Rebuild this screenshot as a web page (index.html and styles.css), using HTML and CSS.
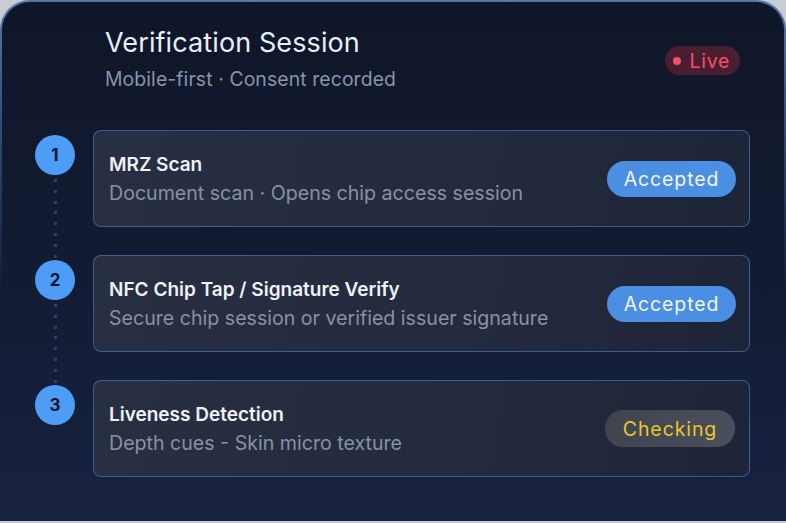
FILE: index.html
```html
<!DOCTYPE html>
<html lang="en">
<head>
<meta charset="utf-8">
<title>Verification Session</title>
<link rel="stylesheet" href="styles.css">
</head>
<body>
<div class="panel">
  <header class="head">
    <div class="head-text">
      <h1 class="title">Verification Session</h1>
      <p class="subtitle">Mobile-first · Consent recorded</p>
    </div>
    <span class="live"><span class="live-dot"></span>Live</span>
  </header>
  <ol class="steps">
    <li class="step">
      <div class="marker"><span class="num">1</span><span class="line"></span></div>
      <div class="card">
        <div class="card-text">
          <div class="card-title">MRZ Scan</div>
          <div class="card-sub">Document scan · Opens chip access session</div>
        </div>
        <span class="pill pill-ok">Accepted</span>
      </div>
    </li>
    <li class="step">
      <div class="marker"><span class="num">2</span><span class="line"></span></div>
      <div class="card">
        <div class="card-text">
          <div class="card-title">NFC Chip Tap / Signature Verify</div>
          <div class="card-sub">Secure chip session or verified issuer signature</div>
        </div>
        <span class="pill pill-ok">Accepted</span>
      </div>
    </li>
    <li class="step">
      <div class="marker"><span class="num">3</span></div>
      <div class="card">
        <div class="card-text">
          <div class="card-title">Liveness Detection</div>
          <div class="card-sub">Depth cues - Skin micro texture</div>
        </div>
        <span class="pill pill-wait">Checking</span>
      </div>
    </li>
  </ol>
</div>
</body>
</html>
```
FILE: styles.css
```css
* { box-sizing: border-box; }
html, body { margin: 0; padding: 0; }
body {
  background: #c9ccd4;
  font-family: Inter, "Noto Sans", "DejaVu Sans", sans-serif;
  width: 786px;
  height: 523px;
  overflow: hidden;
}
.panel {
  width: 786px;
  height: 521px;
  border: 2px solid transparent;
  border-bottom: 0;
  border-radius: 30px 30px 0 0;
  background:
    linear-gradient(180deg, #0f1629 0%, #131b33 50%, #18223f 100%) padding-box,
    linear-gradient(180deg, #5478aa 0%, #34507e 22%, #141c34 55%, #18223f 100%) border-box;
  padding: 0 34px 0 33px;
  display: flex;
  flex-direction: column;
}
.head {
  display: flex;
  align-items: flex-start;
  justify-content: space-between;
  padding: 24px 10px 0 70px;
  height: 128px;
}
.title {
  margin: 0;
  font-size: 27px;
  font-weight: 400;
  color: #e9eef6;
  line-height: 34px;
  letter-spacing: 0.1px;
}
.subtitle {
  margin: 7px 0 0;
  font-size: 19.4px;
  color: #8795aa;
  line-height: 24px;
  letter-spacing: 0.1px;
}
.live {
  margin-top: 20px;
  display: inline-flex;
  align-items: center;
  gap: 9px;
  height: 29px;
  padding: 0 10px 0 8px;
  border-radius: 15px;
  background: #4a1e2e;
  color: #f2506a;
  font-size: 19.5px;
  letter-spacing: 0.7px;
}
.live-dot {
  width: 8px;
  height: 8px;
  border-radius: 50%;
  background: #f2506a;
}
.steps {
  list-style: none;
  margin: 0;
  padding: 0;
  display: flex;
  flex-direction: column;
  gap: 28px;
}
.step {
  display: flex;
  gap: 18px;
  height: 97px;
}
.marker {
  width: 40px;
  flex: none;
  display: flex;
  flex-direction: column;
  align-items: center;
  padding-top: 5px;
}
.num {
  width: 40px;
  height: 40px;
  border-radius: 50%;
  background: #4d9cf6;
  color: #0e1528;
  font-weight: 700;
  font-size: 17px;
  display: flex;
  align-items: center;
  justify-content: center;
  flex: none;
}
.line {
  flex: 1;
  width: 3px;
  margin: 4px 0 -32px;
  background: repeating-linear-gradient(180deg, #2b4268 0 3px, transparent 3px 10.8px);
}
.card {
  flex: 1;
  display: flex;
  align-items: center;
  justify-content: space-between;
  padding: 0 13px 0 15px;
  border: 1px solid rgba(72, 128, 205, 0.6);
  border-radius: 8px;
  background: linear-gradient(100deg, #282f43 0%, #232a3e 60%, #1e2437 100%);
}
.card-text {
  display: flex;
  flex-direction: column;
  gap: 4px;
}
.card-title {
  font-size: 19px;
  font-weight: 600;
  color: #eef2f8;
  line-height: 25px;
}
.card-sub {
  font-size: 19.6px;
  color: #8892a4;
  line-height: 25px;
}
.pill {
  height: 36px;
  min-width: 129px;
  padding: 0 16px;
  border-radius: 18px;
  display: inline-flex;
  align-items: center;
  justify-content: center;
  font-size: 19.5px;
  letter-spacing: 0.9px;
}
.pill-ok {
  background: #4a8fe2;
  color: #f2f6fc;
}
.pill-wait {
  background: linear-gradient(90deg, #40444f, #4a4f5c);
  color: #e8c62c;
  min-width: 130px;
  margin-right: 1px;
  height: 37px;
}
```
